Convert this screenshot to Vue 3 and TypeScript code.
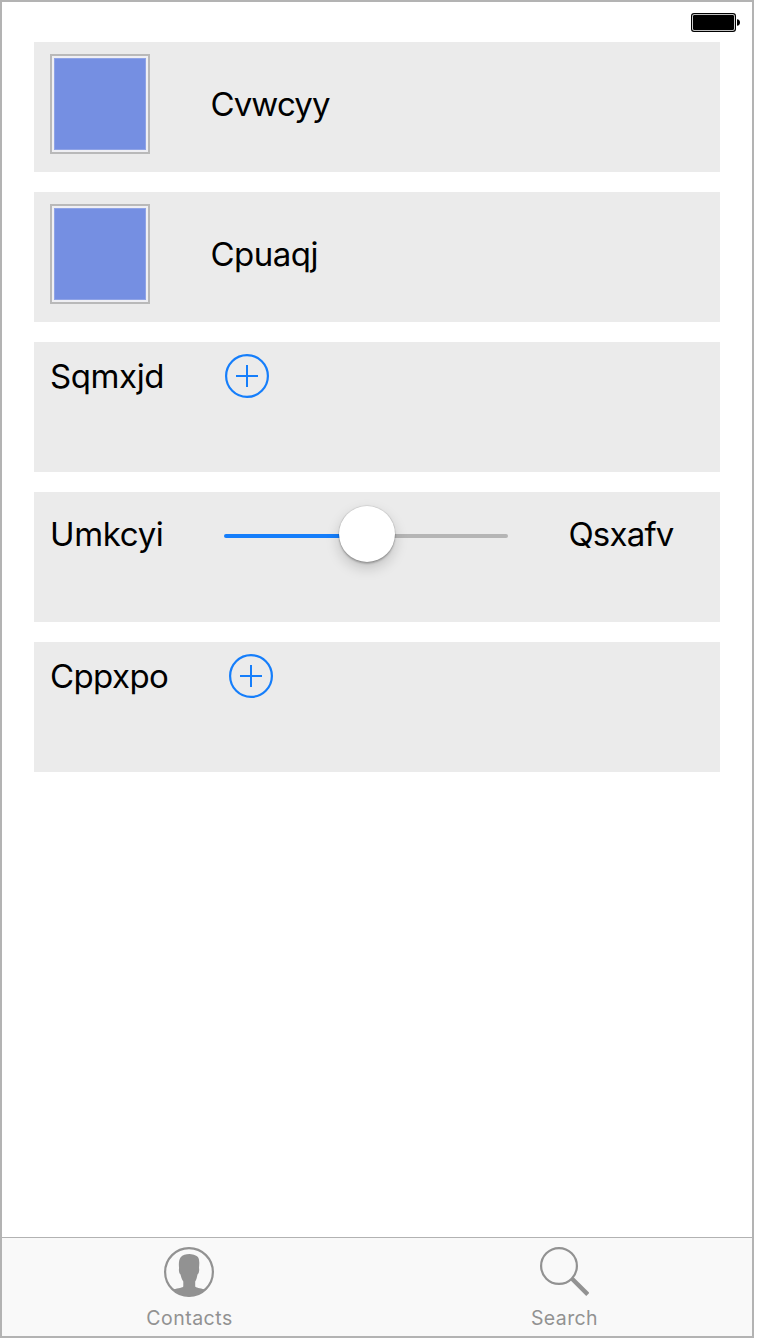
<script setup lang="ts">
interface Row {
  kind: 'photo' | 'add' | 'slider'
  label: string
  spacing: number
  width: number
  trailing?: string
}

const rows: Row[] = [
  { kind: 'photo', label: 'Cvwcyy', spacing: -0.85, width: 120 },
  { kind: 'photo', label: 'Cpuaqj', spacing: -0.5, width: 110 },
  { kind: 'add', label: 'Sqmxjd', spacing: -0.4, width: 115 },
  { kind: 'slider', label: 'Umkcyi', spacing: -0.35, width: 114, trailing: 'Qsxafv' },
  { kind: 'add', label: 'Cppxpo', spacing: -0.6, width: 119 },
]
</script>

<template>
  <div class="phone">
    <header class="status">
      <svg width="50" height="20" viewBox="0 0 50 20">
        <rect x="0.6" y="0.6" width="43.8" height="17.8" rx="2.4" fill="#fff" stroke="#000" stroke-width="1.2" />
        <rect x="2" y="2" width="41" height="15" rx="1.2" fill="#000" />
        <path d="M46 6.2C50 6.2 50 12.8 46 12.8Z" fill="#000" />
      </svg>
    </header>

    <main class="list">
      <section v-for="row in rows" :key="row.label" class="row" :class="row.kind">
        <div v-if="row.kind === 'photo'" class="thumb"><div class="fill"></div></div>
        <span class="label" :style="{ width: row.width + 'px', letterSpacing: row.spacing + 'px' }">{{ row.label }}</span>
        <svg v-if="row.kind === 'add'" class="plus" width="44" height="44" viewBox="0 0 44 44">
          <circle cx="22" cy="22" r="20.9" />
          <path d="M22 11V33M11 22H33" />
        </svg>
        <template v-if="row.kind === 'slider'">
          <div class="range">
            <div class="track"></div>
            <div class="knob"></div>
          </div>
          <span class="label trailing">{{ row.trailing }}</span>
        </template>
      </section>
    </main>

    <nav class="tabs">
      <div class="tab">
        <svg width="50" height="50" viewBox="0 0 50 50">
          <circle cx="25" cy="25" r="23.9" fill="none" stroke="#929292" stroke-width="2.2" />
          <path
            d="M8.500 43C12 41 17.500 41.500 19.300 39.500V34.500C18 32.500 17 30 16.500 27.500C15 26.500 14.600 23 15.100 21C14.600 17 14.800 13 16.500 10.500C18.500 7.800 22 7 25.500 7C28 7 29.500 7.800 31 8.200C35.500 9.300 35.700 13.500 35 21C35.500 23 35 26.500 33.500 27.500C33 30 32.500 32.500 31.200 34.500V39.500C33 41.500 38 41 41.500 43C32 51.200 18 51.200 8.500 43Z"
            fill="#929292"
          />
        </svg>
        <span class="tab-text">Contacts</span>
      </div>
      <div class="tab search">
        <svg width="50" height="50" viewBox="0 0 50 50">
          <circle cx="20" cy="19" r="17.9" fill="none" stroke="#929292" stroke-width="2.2" />
          <path d="M32.800 31.500L48.800 47.500" stroke="#929292" stroke-width="4.400" />
        </svg>
        <span class="tab-text">Search</span>
      </div>
    </nav>
  </div>
</template>

<style>
body {
  background: #fff;
}
</style>

<style scoped>
.phone {
  box-sizing: border-box;
  width: 754px;
  height: 1338px;
  border: 2px solid #b3b3b3;
  display: flex;
  flex-direction: column;
  background: #fff;
  font-family: Inter, "Liberation Sans", sans-serif;
}
.status {
  box-sizing: border-box;
  height: 40px;
  padding: 11px 11px 0 0;
  display: flex;
  justify-content: flex-end;
}
.list {
  flex: 1;
  padding: 0 32px;
  display: flex;
  flex-direction: column;
  gap: 20px;
}
.row {
  box-sizing: border-box;
  height: 130px;
  padding: 12px 16px;
  display: flex;
  align-items: flex-start;
  gap: 60px;
  background: #ebebeb;
}
.label {
  flex: none;
  font-size: 33px;
  line-height: 40px;
  white-space: nowrap;
  color: #000;
}
.trailing {
  letter-spacing: -0.8px;
  text-indent: 0.4px;
}
.photo .label {
  margin-top: 30px;
  text-indent: 0.4px;
}
.add .label {
  margin-top: 2px;
}
.slider .label {
  margin-top: 10px;
}
.thumb {
  box-sizing: border-box;
  width: 100px;
  height: 100px;
  padding: 2px;
  border: 2px solid #b9b9b9;
  background: #efeff3;
}
.fill {
  box-sizing: border-box;
  height: 92px;
  border: 1px solid #8fa3e6;
  background: #758fe2;
}
.plus {
  fill: none;
  stroke: #157efb;
  stroke-width: 2.2;
}
.plus path {
  stroke-width: 2;
}
.range {
  position: relative;
  width: 284px;
  height: 60px;
  display: flex;
  align-items: center;
}
.track {
  width: 284px;
  height: 4px;
  margin-top: 4px;
  border-radius: 2px;
  background: linear-gradient(90deg, #157efb 50%, #b5b5b5 50%);
}
.knob {
  position: absolute;
  left: 115px;
  top: 2px;
  width: 56px;
  height: 56px;
  border-radius: 50%;
  background: #fff;
  box-shadow: 0 0 1px 0.5px rgba(0, 0, 0, 0.15), 0 2px 2px rgba(0, 0, 0, 0.2), 0 6px 14px rgba(0, 0, 0, 0.18);
}
.tabs {
  box-sizing: border-box;
  height: 99px;
  border-top: 1px solid #b2b2b2;
  display: flex;
  background: #f9f9f9;
}
.tab {
  flex: 1;
  padding-top: 9px;
  display: flex;
  flex-direction: column;
  align-items: center;
}
.tab svg {
  margin-right: 2px;
}
.tab-text {
  margin-top: 9px;
  font-size: 19.5px;
  line-height: 24px;
  letter-spacing: 0.5px;
  color: #929292;
}
.search .tab-text {
  letter-spacing: 0.4px;
}
</style>
